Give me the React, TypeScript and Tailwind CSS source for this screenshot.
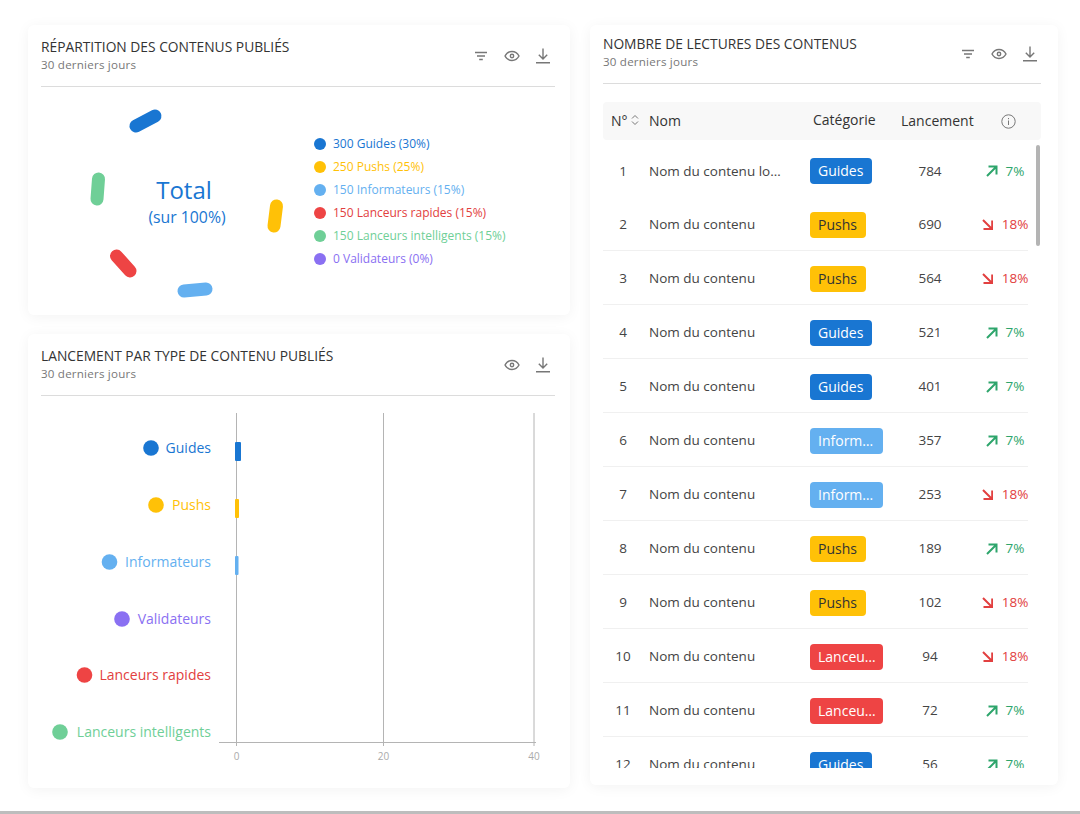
import React from "react";

const font = { fontFamily: '"Open Sans", "Noto Sans", sans-serif' };

function FilterIcon() {
  return (
    <svg width="18" height="18" viewBox="0 0 18 18" fill="none" stroke="#777" strokeWidth="1.3">
      <path d="M3 5.500h12M5 9h8M7.200 12.500h3.600" />
    </svg>
  );
}
function EyeIcon() {
  return (
    <svg width="18" height="18" viewBox="0 0 18 18" fill="none" stroke="#777" strokeWidth="1.400">
      <path d="M2 9c1.600-3 4-4.500 7-4.500S14.400 6 16 9c-1.600 3-4 4.500-7 4.500S3.600 12 2 9Z" />
      <circle cx="9" cy="9" r="1.700" />
    </svg>
  );
}
function DownloadIcon() {
  return (
    <svg width="18" height="18" viewBox="0 0 18 18" fill="none" stroke="#777" strokeWidth="1.400">
      <path d="M9 1.500v10.500M4.800 7.800 9 12l4.200-4.200M2 15.800h14" />
    </svg>
  );
}

function HeaderText({ title }: { title: string }) {
  return (
    <div>
      <div className="text-[13.800px] leading-[18px] font-medium text-[#333]">{title}</div>
      <div className="text-[11.600px] leading-[18px] text-[#777] tracking-[0.2px]">30 derniers jours</div>
    </div>
  );
}

function CardHeader({ title, filter = true }: { title: string; filter?: boolean }) {
  return (
    <div className="flex items-center justify-between border-b border-[#dcdcdc] h-[62px] pt-[1px]">
      <HeaderText title={title} />
      <div className="flex items-center gap-[13px] pr-[3px]">
        {filter && <FilterIcon />}
        <EyeIcon />
        <DownloadIcon />
      </div>
    </div>
  );
}

const legend = [
  { t: "300 Guides (30%)", b: "bg-[#1976d2]", x: "text-[#1976d2]" },
  { t: "250 Pushs (25%)", b: "bg-[#ffc107]", x: "text-[#ffc107]" },
  { t: "150 Informateurs (15%)", b: "bg-[#64b0f0]", x: "text-[#64b0f0]" },
  { t: "150 Lanceurs rapides (15%)", b: "bg-[#ee4444]", x: "text-[#e24040]" },
  { t: "150 Lanceurs intelligents (15%)", b: "bg-[#6fcf97]", x: "text-[#6fcf97]" },
  { t: "0 Validateurs (0%)", b: "bg-[#8a70f2]", x: "text-[#8a70f2]" },
];

function Donut() {
  const segs = [
    { d: "M136 126 L155 116", c: "#1976d2" },
    { d: "M276.500 206 L274 226", c: "#ffc107" },
    { d: "M184 291 L206 289", c: "#64b0f0" },
    { d: "M116.500 256 L130 271", c: "#ee4444" },
    { d: "M98.500 179 L97 199", c: "#6fcf97" },
  ];
  return (
    <div className="relative w-[272px] h-[228px] shrink-0 ml-[-13px]">
      <svg width="272" height="228" viewBox="28 87 272 228" className="block">
        {segs.map((s) => (
          <path key={s.d} d={s.d} stroke={s.c} strokeWidth="13" strokeLinecap="round" fill="none" />
        ))}
      </svg>
      <div className="absolute left-[56px] w-[200px] top-[88px] text-center text-[#1976d2]">
        <div className="text-[24px] leading-[30px] font-medium">Total</div>
        <div className="text-[15.800px] leading-[22px] pl-[6px] mt-[1px]">(sur 100%)</div>
      </div>
    </div>
  );
}

function BarChart() {
  const rows = [
    { l: "Guides", c: "#1976d2", t: "#1976d2", y: 448, dx: 151, w: 6 },
    { l: "Pushs", c: "#ffc107", t: "#ffc107", y: 505, dx: 156, w: 4 },
    { l: "Informateurs", c: "#64b0f0", t: "#64b0f0", y: 562, dx: 109.500, w: 3.500 },
    { l: "Validateurs", c: "#8a70f2", t: "#8a70f2", y: 619, dx: 122, w: 0 },
    { l: "Lanceurs rapides", c: "#ee4444", t: "#e24040", y: 675, dx: 84.500, w: 0 },
    { l: "Lanceurs intelligents", c: "#6fcf97", t: "#6fcf97", y: 732, dx: 60, w: 0 },
  ];
  return (
    <svg width="542" height="392" viewBox="28 396 542 392" className="block ml-[-13px]" style={font}>
      {[236.500, 383.500, 534].map((x) => (
        <path key={x} d={`M${x} 413V746`} stroke="#b4b4b4" strokeWidth="1" />
      ))}
      <path d="M219 742.500H536" stroke="#b4b4b4" strokeWidth="1" />
      {[
        ["0", 236.500],
        ["20", 383.500],
        ["40", 534],
      ].map(([t, x]) => (
        <text key={t} x={x} y="760" fontSize="10" textAnchor="middle" fill="#aaa">
          {t}
        </text>
      ))}
      {rows.map((r) => (
        <g key={r.l}>
          <circle cx={r.dx} cy={r.y} r="7.800" fill={r.c} />
          <text x="211" y={r.y + 5} fontSize="14" textAnchor="end" fill={r.t}>
            {r.l}
          </text>
          {r.w > 0 && <rect x="235" y={r.y - 6} width={r.w} height="19" rx="1" fill={r.c} />}
        </g>
      ))}
    </svg>
  );
}

type Cat = "Guides" | "Pushs" | "Informateurs" | "Lanceurs rapides";
const catStyle: Record<Cat, string> = {
  Guides: "bg-[#1976d2] text-white pr-[9px]",
  Pushs: "bg-[#ffc107] text-[#333] pr-[9px]",
  Informateurs: "bg-[#64b0f0] text-white pr-[6px]",
  "Lanceurs rapides": "bg-[#ee4444] text-white pr-[6px]",
};

const data: [number, string, Cat, number, boolean][] = [
  [1, "Nom du contenu long de la liste", "Guides", 784, true],
  [2, "Nom du contenu", "Pushs", 690, false],
  [3, "Nom du contenu", "Pushs", 564, false],
  [4, "Nom du contenu", "Guides", 521, true],
  [5, "Nom du contenu", "Guides", 401, true],
  [6, "Nom du contenu", "Informateurs", 357, true],
  [7, "Nom du contenu", "Informateurs", 253, false],
  [8, "Nom du contenu", "Pushs", 189, true],
  [9, "Nom du contenu", "Pushs", 102, false],
  [10, "Nom du contenu", "Lanceurs rapides", 94, false],
  [11, "Nom du contenu", "Lanceurs rapides", 72, true],
  [12, "Nom du contenu", "Guides", 56, true],
];

function Trend({ up }: { up: boolean }) {
  return up ? (
    <div className="w-[60px] shrink-0 flex items-center justify-center gap-[8px] text-[13.500px] text-[#2ea56c]">
      <svg width="12" height="12" viewBox="0 0 12 12" fill="none" stroke="#2ea56c" strokeWidth="2">
        <path d="M1 11 10.500 1.500M2.500 1.500h8v8" />
      </svg>
      <span>7%</span>
    </div>
  ) : (
    <div className="w-[60px] shrink-0 flex items-center justify-center gap-[9px] text-[13.500px] text-[#e24040]">
      <svg width="11" height="11" viewBox="0 0 11 11" fill="none" stroke="#e24040" strokeWidth="2">
        <path d="M1 1l9 9M1.500 10h8.700V1.500" />
      </svg>
      <span>18%</span>
    </div>
  );
}

export default function App() {
  return (
    <div className="w-[1080px] h-[814px] bg-white overflow-hidden flex flex-col" style={font}>
      <div className="flex-1 flex items-start pl-[28px] pt-[25px] gap-[20px]">
        <div className="w-[542px] flex flex-col gap-[19px]">
          <section className="h-[290px] bg-white rounded-[6px] shadow-[0_2px_14px_rgba(0,0,0,0.05)] pl-[13px] pr-[15px]">
            <CardHeader title="RÉPARTITION DES CONTENUS PUBLIÉS" />
            <div className="flex items-center">
              <Donut />
              <ul className="ml-[14px] flex flex-col gap-[5px]">
                {legend.map((l) => (
                  <li key={l.t} className={`flex items-center gap-[7px] h-[18px] text-[12px] font-medium ${l.x}`}>
                    <span className={`w-[12px] h-[12px] rounded-full ${l.b}`} />
                    {l.t}
                  </li>
                ))}
              </ul>
            </div>
          </section>
          <section className="h-[454px] bg-white rounded-[6px] shadow-[0_2px_14px_rgba(0,0,0,0.05)] pl-[13px] pr-[15px]">
            <CardHeader title="LANCEMENT PAR TYPE DE CONTENU PUBLIÉS" filter={false} />
            <BarChart />
          </section>
        </div>
        <section className="w-[468px] h-[760px] bg-white rounded-[6px] shadow-[0_2px_14px_rgba(0,0,0,0.05)] pl-[13px] pr-[17px] flex flex-col">
          <div className="flex items-center justify-between border-b border-[#dcdcdc] h-[59px]">
            <div className="mt-[-2px]">
              <HeaderText title="NOMBRE DE LECTURES DES CONTENUS" />
            </div>
            <div className="flex items-center gap-[13px] pr-[2px]">
              <FilterIcon />
              <EyeIcon />
              <DownloadIcon />
            </div>
          </div>
          <div className="mt-[18px] h-[38px] shrink-0 bg-[#f8f8f8] rounded-[4px] flex items-center text-[14px] font-medium text-[#333] pb-[2px]">
            <div className="w-[46px] shrink-0 pl-[8px] flex items-center gap-[3px]">
              N°
              <svg width="8" height="12" viewBox="0 0 8 12" fill="none" stroke="#777" strokeWidth="1">
                <path d="M1 4.500 4 1.500l3 3M1 7.500l3 3 3-3" />
              </svg>
            </div>
            <div className="w-[164px] shrink-0">Nom</div>
            <div className="w-[88px] shrink-0 mt-[-2px]">Catégorie</div>
            <div className="w-[100px] shrink-0">Lancement</div>
            <svg width="15" height="15" viewBox="0 0 15 15" fill="none" stroke="#777" strokeWidth="1" className="mt-[2px]">
              <circle cx="7.500" cy="7.500" r="6.700" />
              <path d="M7.500 6.500v4.500M7.500 4v1.200" />
            </svg>
          </div>
          <div className="relative h-[628px] overflow-hidden">
            <div className="absolute left-[433px] top-[5px] w-[4px] h-[101px] rounded-full bg-[#b4b4b4]" />
            <div className="pt-[3px]">
              {data.map(([n, name, cat, val, up]) => (
                <div
                  key={n}
                  className={`w-[425px] h-[54px] pt-[2px] flex items-center text-[13.500px] text-[#444] ${n === 1 ? "" : "border-b border-[#f0f0f0]"}`}
                >
                  <div className="w-[40px] shrink-0 text-center">{n}</div>
                  <div className="w-[161px] shrink-0 ml-[6px]">
                    <div className="w-[136px] truncate">{name}</div>
                  </div>
                  <div className="w-[95px] shrink-0">
                    <span
                      className={`inline-block max-w-[73px] truncate align-middle h-[26px] leading-[26px] pl-[8px] rounded-[4px] text-[14px] font-medium ${catStyle[cat]}`}
                    >
                      {cat}
                    </span>
                  </div>
                  <div className="w-[50px] shrink-0 text-center">{val}</div>
                  <div className="ml-[20px]">
                    <Trend up={up} />
                  </div>
                </div>
              ))}
            </div>
          </div>
        </section>
      </div>
      <div className="h-[3px] bg-[#bdbdbd] shrink-0" />
    </div>
  );
}
